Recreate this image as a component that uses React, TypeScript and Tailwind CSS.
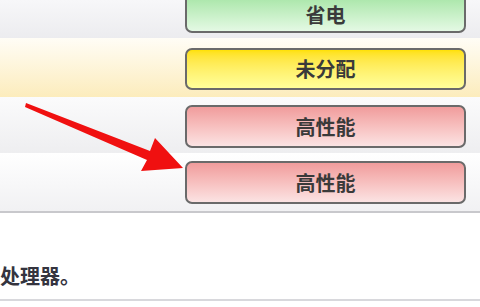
const FONT = { fontFamily: '"Noto Sans CJK SC", "Noto Sans", sans-serif' };

type Plan = { label: string; btn: string; row: string; pt: string; h: string };

const ROWS: Plan[] = [
  { label: "省电", btn: "bg-gradient-to-b from-[#9fe39f] to-[#e4f9e4]", row: "h-[38px] bg-gradient-to-b from-[#f7f7f9] to-[#ececef]", pt: "-mt-[10px] pt-[6px]", h: "h-[43px]" },
  { label: "未分配", btn: "bg-gradient-to-b from-[#ffe100] to-[#ffff9a]", row: "h-[59px] pt-[10px] bg-gradient-to-b from-[#fffdf6] to-[#fcecbc]", pt: "", h: "h-[42px]" },
  { label: "高性能", btn: "bg-gradient-to-b from-[#f09c9c] to-[#fbe3e3]", row: "h-[56px] pt-[8px] bg-gradient-to-b from-[#fbfbfc] to-[#eeeef0]", pt: "", h: "h-[43px]" },
  { label: "高性能", btn: "bg-gradient-to-b from-[#f09c9c] to-[#fbe3e3]", row: "h-[58px] pt-[8px] bg-gradient-to-b from-[#ffffff] to-[#f1f1f3]", pt: "", h: "h-[43px]" },
];

export default function App() {
  return (
    <div className="relative w-[480px] h-[307px] overflow-hidden bg-white" style={FONT}>
      <div className="flex flex-col">
        {ROWS.map((r, i) => (
          <div key={i} className={`flex pl-[185px] ${r.row}`}>
            <div
              className={`w-[281px] ${r.h} ${r.pt} ${r.btn} border-[2.5px] border-[#6a6a6a] rounded-[7px] flex items-center justify-center text-[20px] leading-none font-bold text-[#3a3a3a]`}
            >
              {r.label}
            </div>
          </div>
        ))}
      </div>
      <div className="h-[2px] bg-[#c8c8cc]" />
      <div className="h-[86px] flex items-end pb-[13px]">
        <span className="text-[20px] leading-none font-bold text-[#34343f]">处理器。</span>
      </div>
      <div className="h-[2px] bg-[#d8d8dc]" />

      {/* red arrow */}
      <svg className="absolute left-0 top-0" width="480" height="307" viewBox="0 0 480 307">
        <polygon points="26,103 150,151 155,138 183,168 141,171 147,160 25,107" fill="#f01010" />
      </svg>
    </div>
  );
}
